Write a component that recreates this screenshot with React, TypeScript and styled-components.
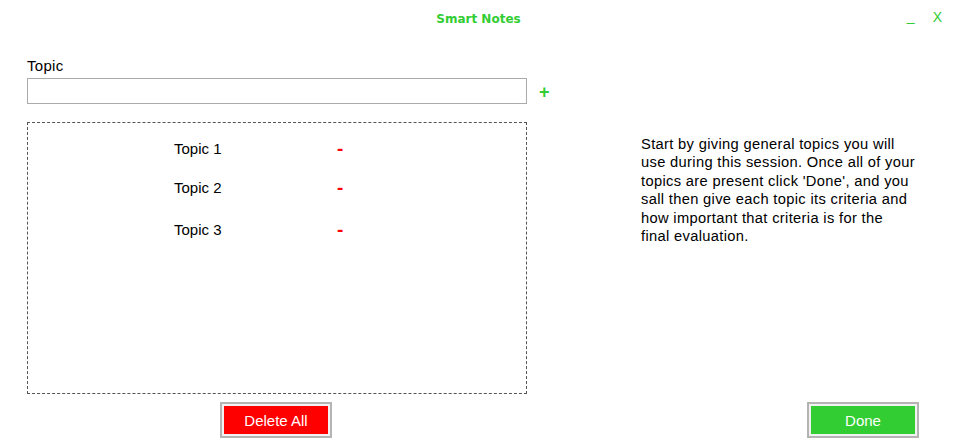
import React from "react";
import styled, { createGlobalStyle } from "styled-components";

const GlobalStyle = createGlobalStyle`
  html, body { margin: 0; padding: 0; background: #ffffff; }
  body { font-family: "Liberation Sans", Arial, sans-serif; color: #000; }
  * { box-sizing: border-box; }
`;

const GREEN = "#32cd32";

const Window = styled.div`
  width: 957px;
  height: 446px;
  background: #fff;
  display: flex;
  flex-direction: column;
`;

const TitleBar = styled.div`
  height: 40px;
  display: grid;
  grid-template-columns: 1fr auto 1fr;
  align-items: start;
  padding-top: 10px;
`;

const Title = styled.div`
  grid-column: 2;
  font-family: "DejaVu Sans", Verdana, sans-serif;
  font-weight: bold;
  font-size: 12px;
  line-height: 14px;
  margin-top: 2px;
  color: ${GREEN};
`;

const Controls = styled.div`
  grid-column: 3;
  justify-self: end;
  display: flex;
  align-items: flex-start;
  gap: 18px;
  padding-right: 15px;
  color: ${GREEN};
  font-family: "Liberation Sans", Arial, sans-serif;
`;

const ControlButton = styled.span<{ $offset?: number }>`
  font-size: 14px;
  line-height: 14px;
  margin-top: ${(p) => p.$offset ?? 0}px;
  cursor: pointer;
`;

const Main = styled.div`
  display: grid;
  grid-template-columns: 500px 1fr;
  column-gap: 114px;
  row-gap: 8px;
  padding: 18px 0 0 27px;
`;

const LeftColumn = styled.div`
  display: flex;
  flex-direction: column;
`;

const Label = styled.label`
  font-size: 15px;
  line-height: 16px;
  letter-spacing: 0.3px;
  margin-bottom: 4px;
`;

const InputRow = styled.div`
  display: flex;
  align-items: center;
  gap: 12px;
  width: 540px;
`;

const TextInput = styled.input`
  width: 500px;
  height: 26px;
  border: 1px solid #ababab;
  outline: none;
  padding: 0 4px;
  font-family: inherit;
  font-size: 14px;
  flex-shrink: 0;
`;

const AddButton = styled.span`
  color: ${GREEN};
  font-weight: bold;
  font-size: 18px;
  line-height: 18px;
  margin-top: 2px;
  cursor: pointer;
`;

const TopicBox = styled.div`
  margin-top: 18px;
  height: 272px;
  border: 1px dashed #555;
  padding: 17px 0 0 146px;
  display: flex;
  flex-direction: column;
`;

const TopicRow = styled.div`
  display: grid;
  grid-template-columns: 163px auto;
  align-items: center;
  height: 16px;
  margin-bottom: 23px;
  &:nth-child(2) {
    margin-bottom: 26px;
  }
`;

const TopicName = styled.span`
  font-size: 15px;
  line-height: 16px;
`;

const RemoveButton = styled.span`
  color: #ff0000;
  font-weight: bold;
  font-size: 19px;
  line-height: 16px;
  margin-top: 1px;
  cursor: pointer;
`;

const Help = styled.p`
  margin: 77px 0 0 0;
  font-size: 14.7px;
  line-height: 18.4px;
  letter-spacing: 0.33px;
  white-space: nowrap;
`;

const ButtonCell = styled.div<{ $offset?: number }>`
  display: flex;
  justify-content: flex-start;
  padding-left: ${(p) => p.$offset ?? 0}px;
`;

const ActionButton = styled.button<{ $bg: string }>`
  width: 112px;
  height: 36px;
  border: 2px solid #b4b4b4;
  box-shadow: inset 0 0 0 2px #f2f2f2;
  background: ${(p) => p.$bg};
  color: #fff;
  font-family: "Liberation Sans", Arial, sans-serif;
  font-size: 15px;
  padding: 0;
  cursor: pointer;
`;

const topics = ["Topic 1", "Topic 2", "Topic 3"];

export default function App() {
  return (
    <>
      <GlobalStyle />
      <Window>
        <TitleBar>
          <Title>Smart Notes</Title>
          <Controls>
            <ControlButton $offset={-1}>_</ControlButton>
            <ControlButton $offset={0}>X</ControlButton>
          </Controls>
        </TitleBar>
        <Main>
          <LeftColumn>
            <Label>Topic</Label>
            <InputRow>
              <TextInput type="text" />
              <AddButton>+</AddButton>
            </InputRow>
            <TopicBox>
              {topics.map((t) => (
                <TopicRow key={t}>
                  <TopicName>{t}</TopicName>
                  <RemoveButton>-</RemoveButton>
                </TopicRow>
              ))}
            </TopicBox>
          </LeftColumn>
          <Help>
            Start by giving general topics you will
            <br />
            use during this session. Once all of your
            <br />
            topics are present click 'Done', and you
            <br />
            sall then give each topic its criteria and
            <br />
            how important that criteria is for the
            <br />
            final evaluation.
          </Help>
          <ButtonCell $offset={193}>
            <ActionButton $bg="#ff0000">Delete All</ActionButton>
          </ButtonCell>
          <ButtonCell $offset={166}>
            <ActionButton $bg={GREEN}>Done</ActionButton>
          </ButtonCell>
        </Main>
      </Window>
    </>
  );
}
